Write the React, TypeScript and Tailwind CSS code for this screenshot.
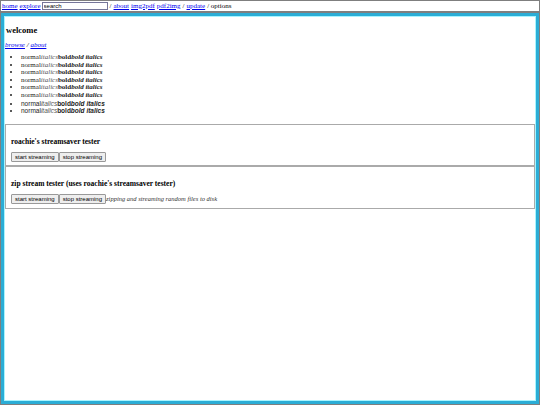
import React from 'react';

const serif = { fontFamily: '"Liberation Serif", serif' };
const sans = { fontFamily: '"Liberation Sans", sans-serif' };

const rows = [false, false, false, false, false, false, true, true];

const Btn = ({ children }: { children: React.ReactNode }) => (
  <button className="h-[10px] px-[3px] border border-[#999] bg-[#eee] rounded-[1px] text-[6px] leading-[8px] text-black font-['Liberation_Sans',sans-serif]">
    {children}
  </button>
);

const App = () => {
  return (
    <div className="w-[540px] h-[405px] bg-[#7f7f7f] overflow-hidden font-['Liberation_Serif',serif] text-black">
      {/* top bar */}
      <div className="h-[10px] bg-white flex items-center pl-[1px] text-[7px] leading-[9px] mx-[1px] mt-[1px]">
        <a className="text-[#00e] underline" href="#">home</a>
        <a className="ml-[2px] text-[#00e] underline" href="#">explore</a>
        <input
          className="ml-[1px] w-[66px] h-[8px] border border-[#767699] text-[6px] px-[1px] leading-[6px] font-['Liberation_Sans',sans-serif]"
          defaultValue="search"
        />
        <span className="ml-[2px]">/</span>
        <a className="ml-[2px] text-[#00e] underline" href="#">about</a>
        <a className="ml-[2px] text-[#00e] underline" href="#">img2pdf</a>
        <a className="ml-[2px] text-[#00e] underline" href="#">pdf2img</a>
        <span className="ml-[2px]">/</span>
        <a className="ml-[2px] text-[#00e] underline" href="#">update</a>
        <span className="ml-[2px]">/ options</span>
      </div>

      {/* main panel */}
      <div className="mx-[1px] mt-[2px] h-[391px] border-[3px] border-[#2badd6]">
        <div className="h-full border border-[#a8f4ff] bg-white">
          <h3 className="text-[8.5px] font-bold mt-[8px] ml-[1px] leading-[10px]">welcome</h3>
          <p className="text-[7px] leading-[9px] mt-[6px] italic">
            <a className="text-[#00e] underline" href="#">browse</a> / <a className="text-[#00e] underline" href="#">about</a>
          </p>
          <ul className="list-disc ml-[16px] mt-[4px] leading-[7.6px] text-[#222]">
            {rows.map((s, i) => (
              <li key={i} style={s ? sans : serif} className={s ? 'text-[6.5px]' : 'text-[7px]'}>
                normal<i className="text-[#555]">italics</i>
                <b>bold</b>
                <b><i>bold italics</i></b>
              </li>
            ))}
          </ul>

          <div className="mt-[9px] border border-[#aaa] px-[5px] pb-[3px]">
            <h4 className="font-bold text-[7.5px] leading-[9px] mt-[12px]">roachie's streamsaver tester</h4>
            <div className="mt-[6px] flex items-center">
              <Btn>start streaming</Btn>
              <Btn>stop streaming</Btn>
            </div>
          </div>
          <div className="border border-[#aaa] px-[5px] pb-[4px]">
            <h4 className="font-bold text-[7.5px] leading-[9px] mt-[12px]">zip stream tester (uses roachie's streamsaver tester)</h4>
            <div className="mt-[6px] flex items-center">
              <Btn>start streaming</Btn>
              <Btn>stop streaming</Btn>
              <i className="text-[6.5px] text-[#333]">zipping and streaming random files to disk</i>
            </div>
          </div>
        </div>
      </div>
    </div>
  );
};

export default App;
